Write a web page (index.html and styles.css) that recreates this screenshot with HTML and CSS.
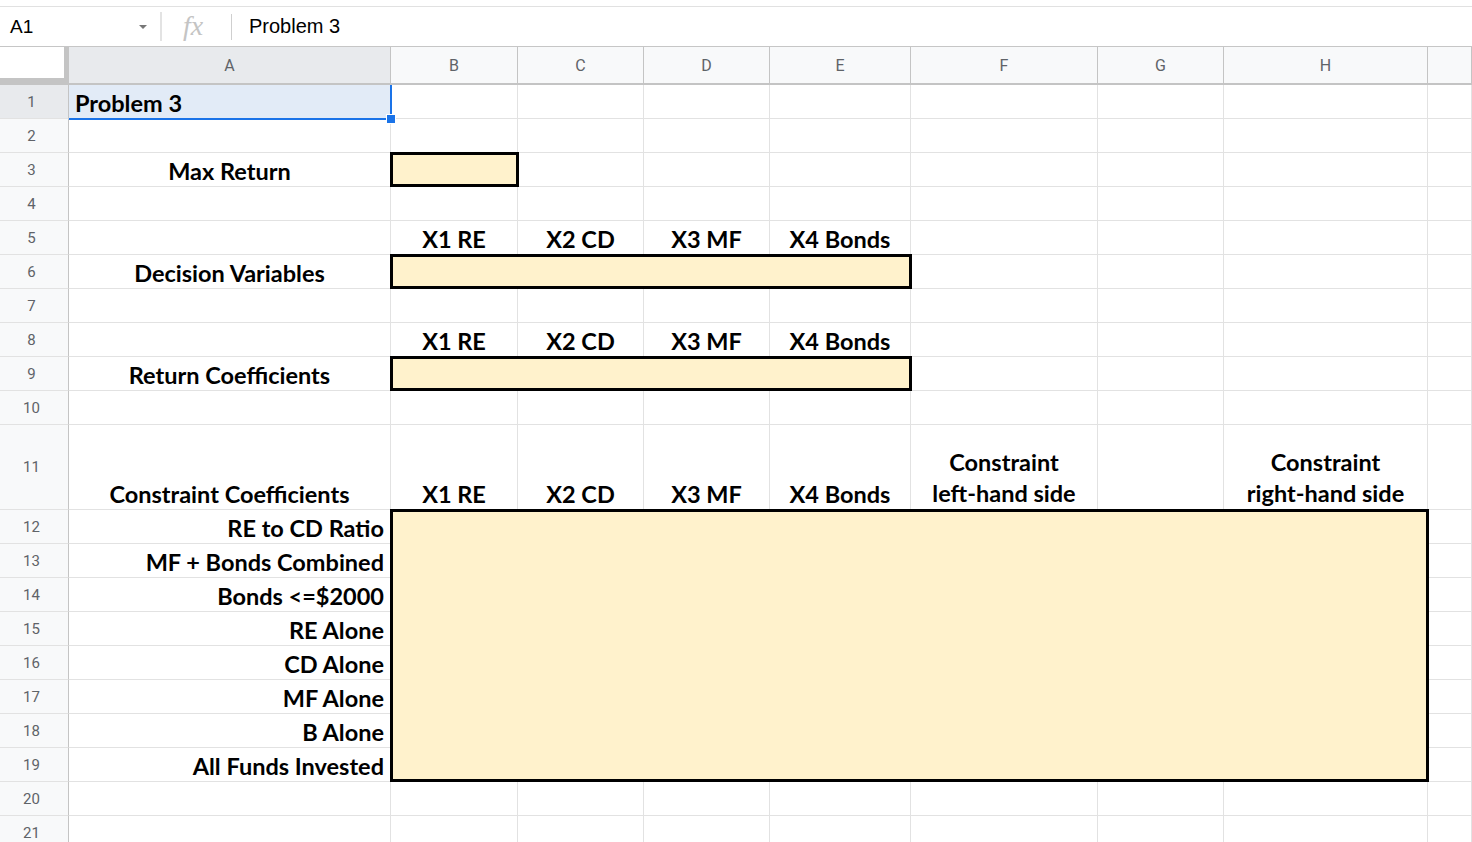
FILE: index.html
```html
<!doctype html>
<html>
<head>
  <title>Problem 3</title>
  <meta charset='UTF-8'>
  <link rel="stylesheet" href="styles.css">
</head>
<body>
  <div class='formula'>
    <div class='namebox'><span>A1</span><i class='caret'></i></div>
    <span class='fx'>fx</span>
    <span class='sep'></span>
    <span class='value'>Problem 3</span>
  </div>

  <div class='sheet'>
    <!-- column headers -->
    <div class='corner'></div>
    <div class='ch sel'>A</div><div class='ch'>B</div><div class='ch'>C</div><div class='ch'>D</div>
    <div class='ch'>E</div><div class='ch'>F</div><div class='ch'>G</div><div class='ch'>H</div><div class='ch'></div>

    <!-- ranges with the yellow fill -->
    <div class='range r3'></div>
    <div class='range r6'></div>
    <div class='range r9'></div>
    <div class='range r12'></div>

    <!-- 1 -->
    <div class='rh sel'>1</div>
    <div class='c active'>Problem 3</div>
    <div class='c'></div><div class='c'></div><div class='c'></div><div class='c'></div>
    <div class='c'></div><div class='c'></div><div class='c'></div><div class='c'></div>
    <!-- 2 -->
    <div class='rh'>2</div>
    <div class='c'></div><div class='c'></div><div class='c'></div><div class='c'></div><div class='c'></div>
    <div class='c'></div><div class='c'></div><div class='c'></div><div class='c'></div>
    <!-- 3 -->
    <div class='rh'>3</div>
    <div class='c ctr'>Max Return</div>
    <div class='c'></div><div class='c'></div><div class='c'></div>
    <div class='c'></div><div class='c'></div><div class='c'></div><div class='c'></div>
    <!-- 4 -->
    <div class='rh'>4</div>
    <div class='c'></div><div class='c'></div><div class='c'></div><div class='c'></div><div class='c'></div>
    <div class='c'></div><div class='c'></div><div class='c'></div><div class='c'></div>
    <!-- 5 -->
    <div class='rh'>5</div>
    <div class='c'></div>
    <div class='c ctr'>X1 RE</div><div class='c ctr'>X2 CD</div><div class='c ctr'>X3 MF</div><div class='c ctr'>X4 Bonds</div>
    <div class='c'></div><div class='c'></div><div class='c'></div><div class='c'></div>
    <!-- 6 -->
    <div class='rh'>6</div>
    <div class='c ctr'>Decision Variables</div>
    <div class='c'></div><div class='c'></div><div class='c'></div><div class='c'></div>
    <!-- 7 -->
    <div class='rh'>7</div>
    <div class='c'></div><div class='c'></div><div class='c'></div><div class='c'></div><div class='c'></div>
    <div class='c'></div><div class='c'></div><div class='c'></div><div class='c'></div>
    <!-- 8 -->
    <div class='rh'>8</div>
    <div class='c'></div>
    <div class='c ctr'>X1 RE</div><div class='c ctr'>X2 CD</div><div class='c ctr'>X3 MF</div><div class='c ctr'>X4 Bonds</div>
    <div class='c'></div><div class='c'></div><div class='c'></div><div class='c'></div>
    <!-- 9 -->
    <div class='rh'>9</div>
    <div class='c ctr'>Return Coefficients</div>
    <div class='c'></div><div class='c'></div><div class='c'></div><div class='c'></div>
    <!-- 10 -->
    <div class='rh'>10</div>
    <div class='c'></div><div class='c'></div><div class='c'></div><div class='c'></div><div class='c'></div>
    <div class='c'></div><div class='c'></div><div class='c'></div><div class='c'></div>
    <!-- 11 -->
    <div class='rh'>11</div>
    <div class='c ctr'>Constraint Coefficients</div>
    <div class='c ctr'>X1 RE</div><div class='c ctr'>X2 CD</div><div class='c ctr'>X3 MF</div><div class='c ctr'>X4 Bonds</div>
    <div class='c ctr wrap'>Constraint<br>left-hand side</div>
    <div class='c'></div>
    <div class='c ctr wrap'>Constraint<br>right-hand side</div>
    <div class='c'></div>
    <!-- 12 - 19 -->
    <div class='rh'>12</div><div class='c rt'>RE to CD Ratio</div><div class='c'></div>
    <div class='rh'>13</div><div class='c rt'>MF + Bonds Combined</div><div class='c'></div>
    <div class='rh'>14</div><div class='c rt'>Bonds &lt;=$2000</div><div class='c'></div>
    <div class='rh'>15</div><div class='c rt'>RE Alone</div><div class='c'></div>
    <div class='rh'>16</div><div class='c rt'>CD Alone</div><div class='c'></div>
    <div class='rh'>17</div><div class='c rt'>MF Alone</div><div class='c'></div>
    <div class='rh'>18</div><div class='c rt'>B Alone</div><div class='c'></div>
    <div class='rh'>19</div><div class='c rt'>All Funds Invested</div><div class='c'></div>
    <!-- 20 -->
    <div class='rh'>20</div>
    <div class='c'></div><div class='c'></div><div class='c'></div><div class='c'></div><div class='c'></div>
    <div class='c'></div><div class='c'></div><div class='c'></div><div class='c'></div>
    <!-- 21 -->
    <div class='rh'>21</div>
    <div class='c'></div><div class='c'></div><div class='c'></div><div class='c'></div><div class='c'></div>
    <div class='c'></div><div class='c'></div><div class='c'></div><div class='c'></div>
  </div>
</body>
</html>
```
FILE: styles.css
```css
html, body { height: 100% }
body {
  margin: 0;
  background: #fff;
  overflow: hidden;
  font-family: Roboto, "Liberation Sans", sans-serif
}

/* formula bar */
.formula {
  margin-top: 6px;
  height: 41px;
  box-sizing: border-box;
  border-top: 1px solid #e1e1e1;
  border-bottom: 1px solid #c6c6c6;
  display: flex;
  align-items: center;
  font-family: "Liberation Sans", Arial, sans-serif;
  color: #000
}
.namebox {
  width: 162px;
  height: 29px;
  box-sizing: border-box;
  padding: 1px 13px 0 10px;
  border-right: 2px solid #e3e3e3;
  display: flex;
  align-items: center;
  justify-content: space-between;
  font-size: 19px
}
.caret {
  border-left: 4px solid transparent;
  border-right: 4px solid transparent;
  border-top: 4px solid #777
}
.fx {
  margin-left: 21px;
  width: 28px;
  font: italic 28px "Liberation Serif", serif;
  color: #c4c4c4;
  position: relative;
  top: -1px
}
.sep {
  margin-left: 20px;
  width: 1px;
  height: 26px;
  background: #cfcfcf
}
.value {
  margin-left: 17px;
  font-size: 20px
}

/* grid */
.sheet {
  display: grid;
  grid-template-columns: 69px 322px 127px 126px 126px 141px 187px 126px 204px 1fr;
  grid-template-rows: 38px repeat(10, 34px) 85px repeat(10, 34px);
  font: bold 23.5px Lato, "Open Sans", sans-serif;
  color: #000
}
.corner {
  background: #fff;
  border-right: 5px solid #c4c4c4;
  border-bottom: 7px solid #c4c4c4
}
.ch {
  background: #f8f9fa;
  border-right: 1px solid #c4c4c4;
  border-bottom: 2px solid #c4c4c4;
  display: flex;
  align-items: center;
  justify-content: center;
  font: 16px Roboto, sans-serif;
  color: #5f6368
}
.rh {
  background: #f8f9fa;
  border-right: 1px solid #c4c4c4;
  border-bottom: 1px solid #e2e2e2;
  display: flex;
  align-items: center;
  justify-content: center;
  padding-right: 5px;
  font: 15px Roboto, sans-serif;
  color: #5f6368
}
.ch.sel, .rh.sel { background: #e8eaed }
.corner, .ch, .rh, .c { box-sizing: border-box }

.c {
  border-right: 1px solid #e2e2e2;
  border-bottom: 1px solid #e2e2e2;
  display: flex;
  align-items: flex-end;
  padding: 0 6px;
  line-height: 1.22;
  white-space: nowrap
}
.c.ctr { justify-content: center; text-align: center }
.c.rt { justify-content: flex-end }
.c.wrap { line-height: 31px }

.c.active {
  position: relative;
  z-index: 2;
  background: #e2ebf7;
  border-right: 2px solid #1a73e8;
  border-bottom: 2px solid #1a73e8;
  margin: 0 -1px -1px 0
}
.c.active::after {
  content: '';
  position: absolute;
  right: -6px;
  bottom: -6px;
  width: 8px;
  height: 8px;
  background: #1a73e8;
  border: 1px solid #fff
}

.range {
  position: relative;
  z-index: 1;
  box-sizing: border-box;
  background: #fff2cc;
  border: 3px solid #000;
  margin: -1px -1px 0 -1px
}
.r3 { grid-column: 3; grid-row: 4 }
.r6 { grid-column: 3 / 7; grid-row: 7 }
.r9 { grid-column: 3 / 7; grid-row: 10 }
.r12 { grid-column: 3 / 10; grid-row: 13 / 21 }
```
